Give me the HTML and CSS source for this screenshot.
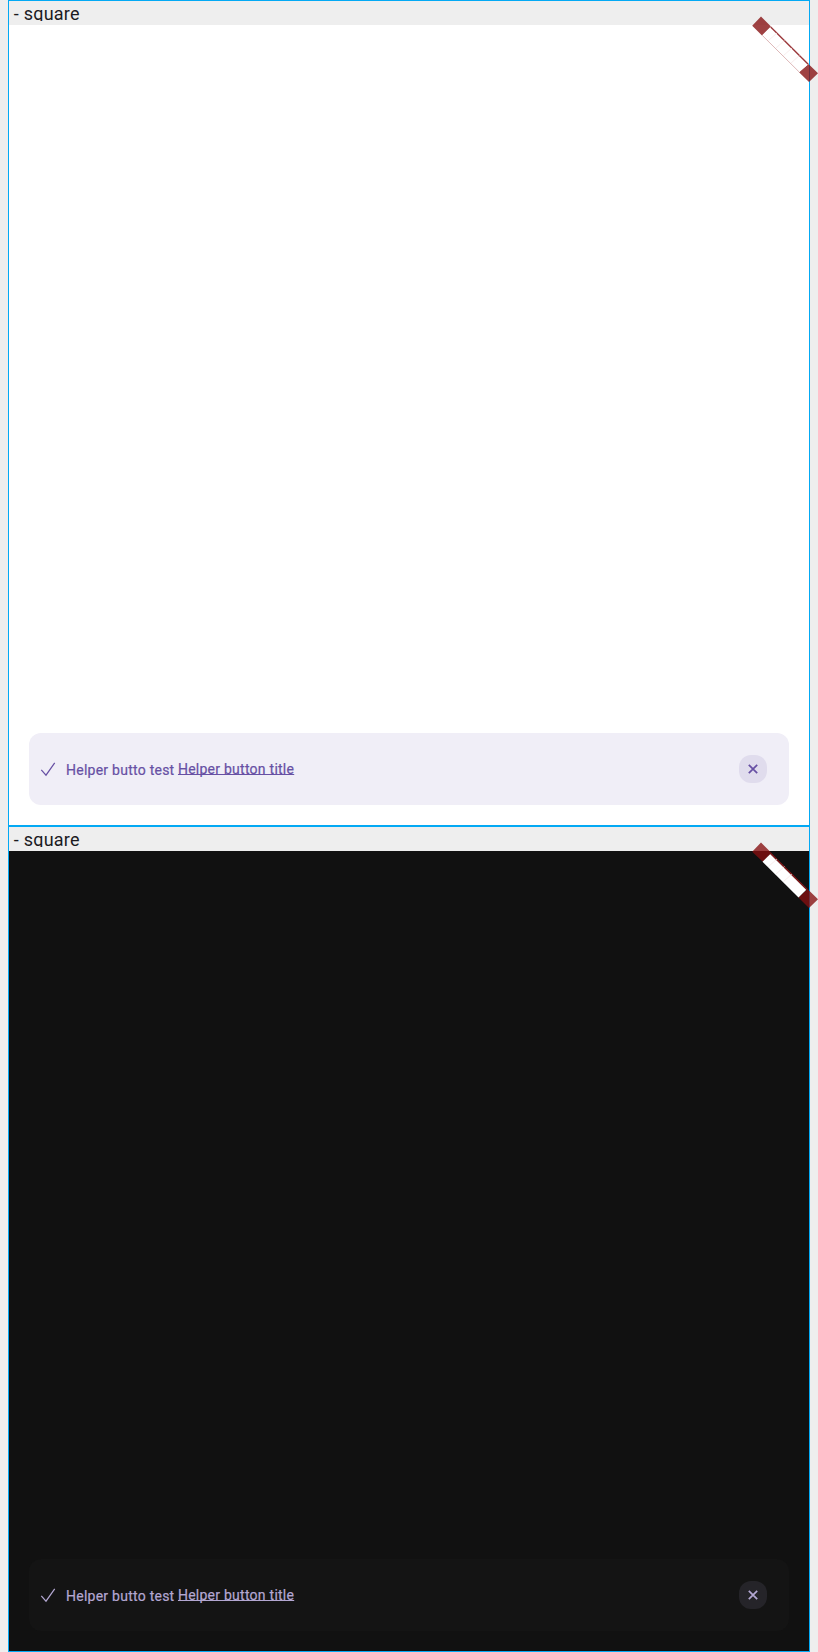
FILE: index.html
```html
<!DOCTYPE html>
<html lang="en">
<head>
<meta charset="utf-8">
<title>Square</title>
<link rel="stylesheet" href="styles.css">
</head>
<body>
<main class="board">
  <section class="frame light">
    <header class="label">- square</header>
    <div class="screen">
      <div class="snackbar">
        <svg class="check" viewBox="0 0 16 16"><path d="M1.3 8.8 6 14.2 14.7 1.8"/></svg>
        <span class="message">Helper butto test</span>
        <a class="action">Helper button title</a>
        <button class="close" aria-label="Close"><svg viewBox="0 0 10 10"><path d="M.8.8 9.2 9.2M9.2.8.8 9.2"/></svg></button>
      </div>
    </div>
    <svg class="ribbon" viewBox="0 0 66 66">
      <path class="end" d="M9 .5 19 10.5 10 19.5.2 9.7ZM56.5 48 66 57.2 57 66 47 56.3Z"/>
      <path class="fill" d="M19 10.5 56.5 48 47 56.3 10 19.5Z"/>
      <path class="edge" d="M18.7 10.9 56.2 48.3"/>
      <path class="faint" d="M10.2 19.3 47.2 56"/>
      <path class="ticks" d="M16.5 24.5 25 17M24 32 32.5 24.5M31.5 39.5 40 32M39 47 47.5 39.5"/>
    </svg>
  </section>
  <section class="frame dark">
    <header class="label">- square</header>
    <div class="screen">
      <div class="snackbar">
        <svg class="check" viewBox="0 0 16 16"><path d="M1.3 8.8 6 14.2 14.7 1.8"/></svg>
        <span class="message">Helper butto test</span>
        <a class="action">Helper button title</a>
        <button class="close" aria-label="Close"><svg viewBox="0 0 10 10"><path d="M.8.8 9.2 9.2M9.2.8.8 9.2"/></svg></button>
      </div>
    </div>
    <svg class="ribbon" viewBox="0 0 66 66">
      <path class="end" d="M9 .5 19.5 11 10.8 19.8.2 9.7ZM55.5 47 66 57.2 57 66 46.5 55.5Z"/>
      <path class="fill" d="M18.3 12 54.3 47.7 46.5 55.5 10.5 19.8Z"/>
      <path class="edge" d="M18.7 11.4 55 47.4"/>
      <path class="ticks" d="M16.5 24.5 25 17M24 32 32.5 24.5M31.5 39.5 40 32"/>
    </svg>
  </section>
</main>
</body>
</html>
```
FILE: styles.css
```css
* { box-sizing: border-box; }
body {
  margin: 0;
  background: #eee;
  font-family: Roboto, sans-serif;
}
.board {
  padding: 0 8px;
  overflow: hidden;
}
.frame {
  position: relative;
  display: flex;
  flex-direction: column;
  height: 826px;
  border: 1px solid #03a9f4;
}
.label {
  height: 20px;
  margin-bottom: 4px;
  padding-left: 4.7px;
  overflow: hidden;
  color: #1b1b1f;
  font-size: 18px;
  line-height: 25px;
  letter-spacing: 0.25px;
  white-space: nowrap;
}
.screen {
  flex: 1;
  display: flex;
  align-items: flex-end;
  padding: 20px;
}
.snackbar {
  flex: 1;
  display: flex;
  align-items: center;
  height: 72px;
  padding: 0 22px 0 11px;
  border-radius: 12px;
  font-size: 14px;
  font-weight: 400;
  line-height: 20px;
  letter-spacing: 0.25px;
  -webkit-text-stroke: 0.2px currentColor;
  white-space: nowrap;
}
.check {
  width: 16px;
  height: 16px;
  margin-right: 10px;
  fill: none;
  stroke: currentColor;
  stroke-width: 1.2;
}
.message { margin: 2px 3.5px 0 0; }
.action {
  height: 20px;
  text-decoration: underline;
  text-decoration-thickness: 1px;
  text-underline-offset: 0;
  text-decoration-skip-ink: none;
}
.close {
  display: grid;
  place-items: center;
  width: 28px;
  height: 28px;
  margin-left: auto;
  padding: 0;
  border: 0;
  border-radius: 12px;
  color: inherit;
}
.close svg {
  width: 10px;
  height: 10px;
  fill: none;
  stroke: currentColor;
  stroke-width: 1.7;
}
.light .screen { background: #fff; }
.light .snackbar { background: #f0eef7; color: #6750a4; }
.light .close { background: #e0dced; }
.dark .screen { background: #111; }
.dark .snackbar { background: #141414; color: #b3a7d2; }
.dark .close { background: #252429; }
.ribbon {
  position: absolute;
  top: 15px;
  right: -9px;
  width: 66px;
  height: 66px;
}
.end { fill: #850f11; fill-opacity: 0.79; }
.fill { fill: #fff; }
.edge { stroke: #9b373a; stroke-width: 1.4; }
.dark .edge { stroke: #85191b; }
.faint { stroke: #ddb7b8; stroke-width: 1; }
.ticks { fill: none; stroke: #f5e5e5; stroke-width: 0.7; }
```
